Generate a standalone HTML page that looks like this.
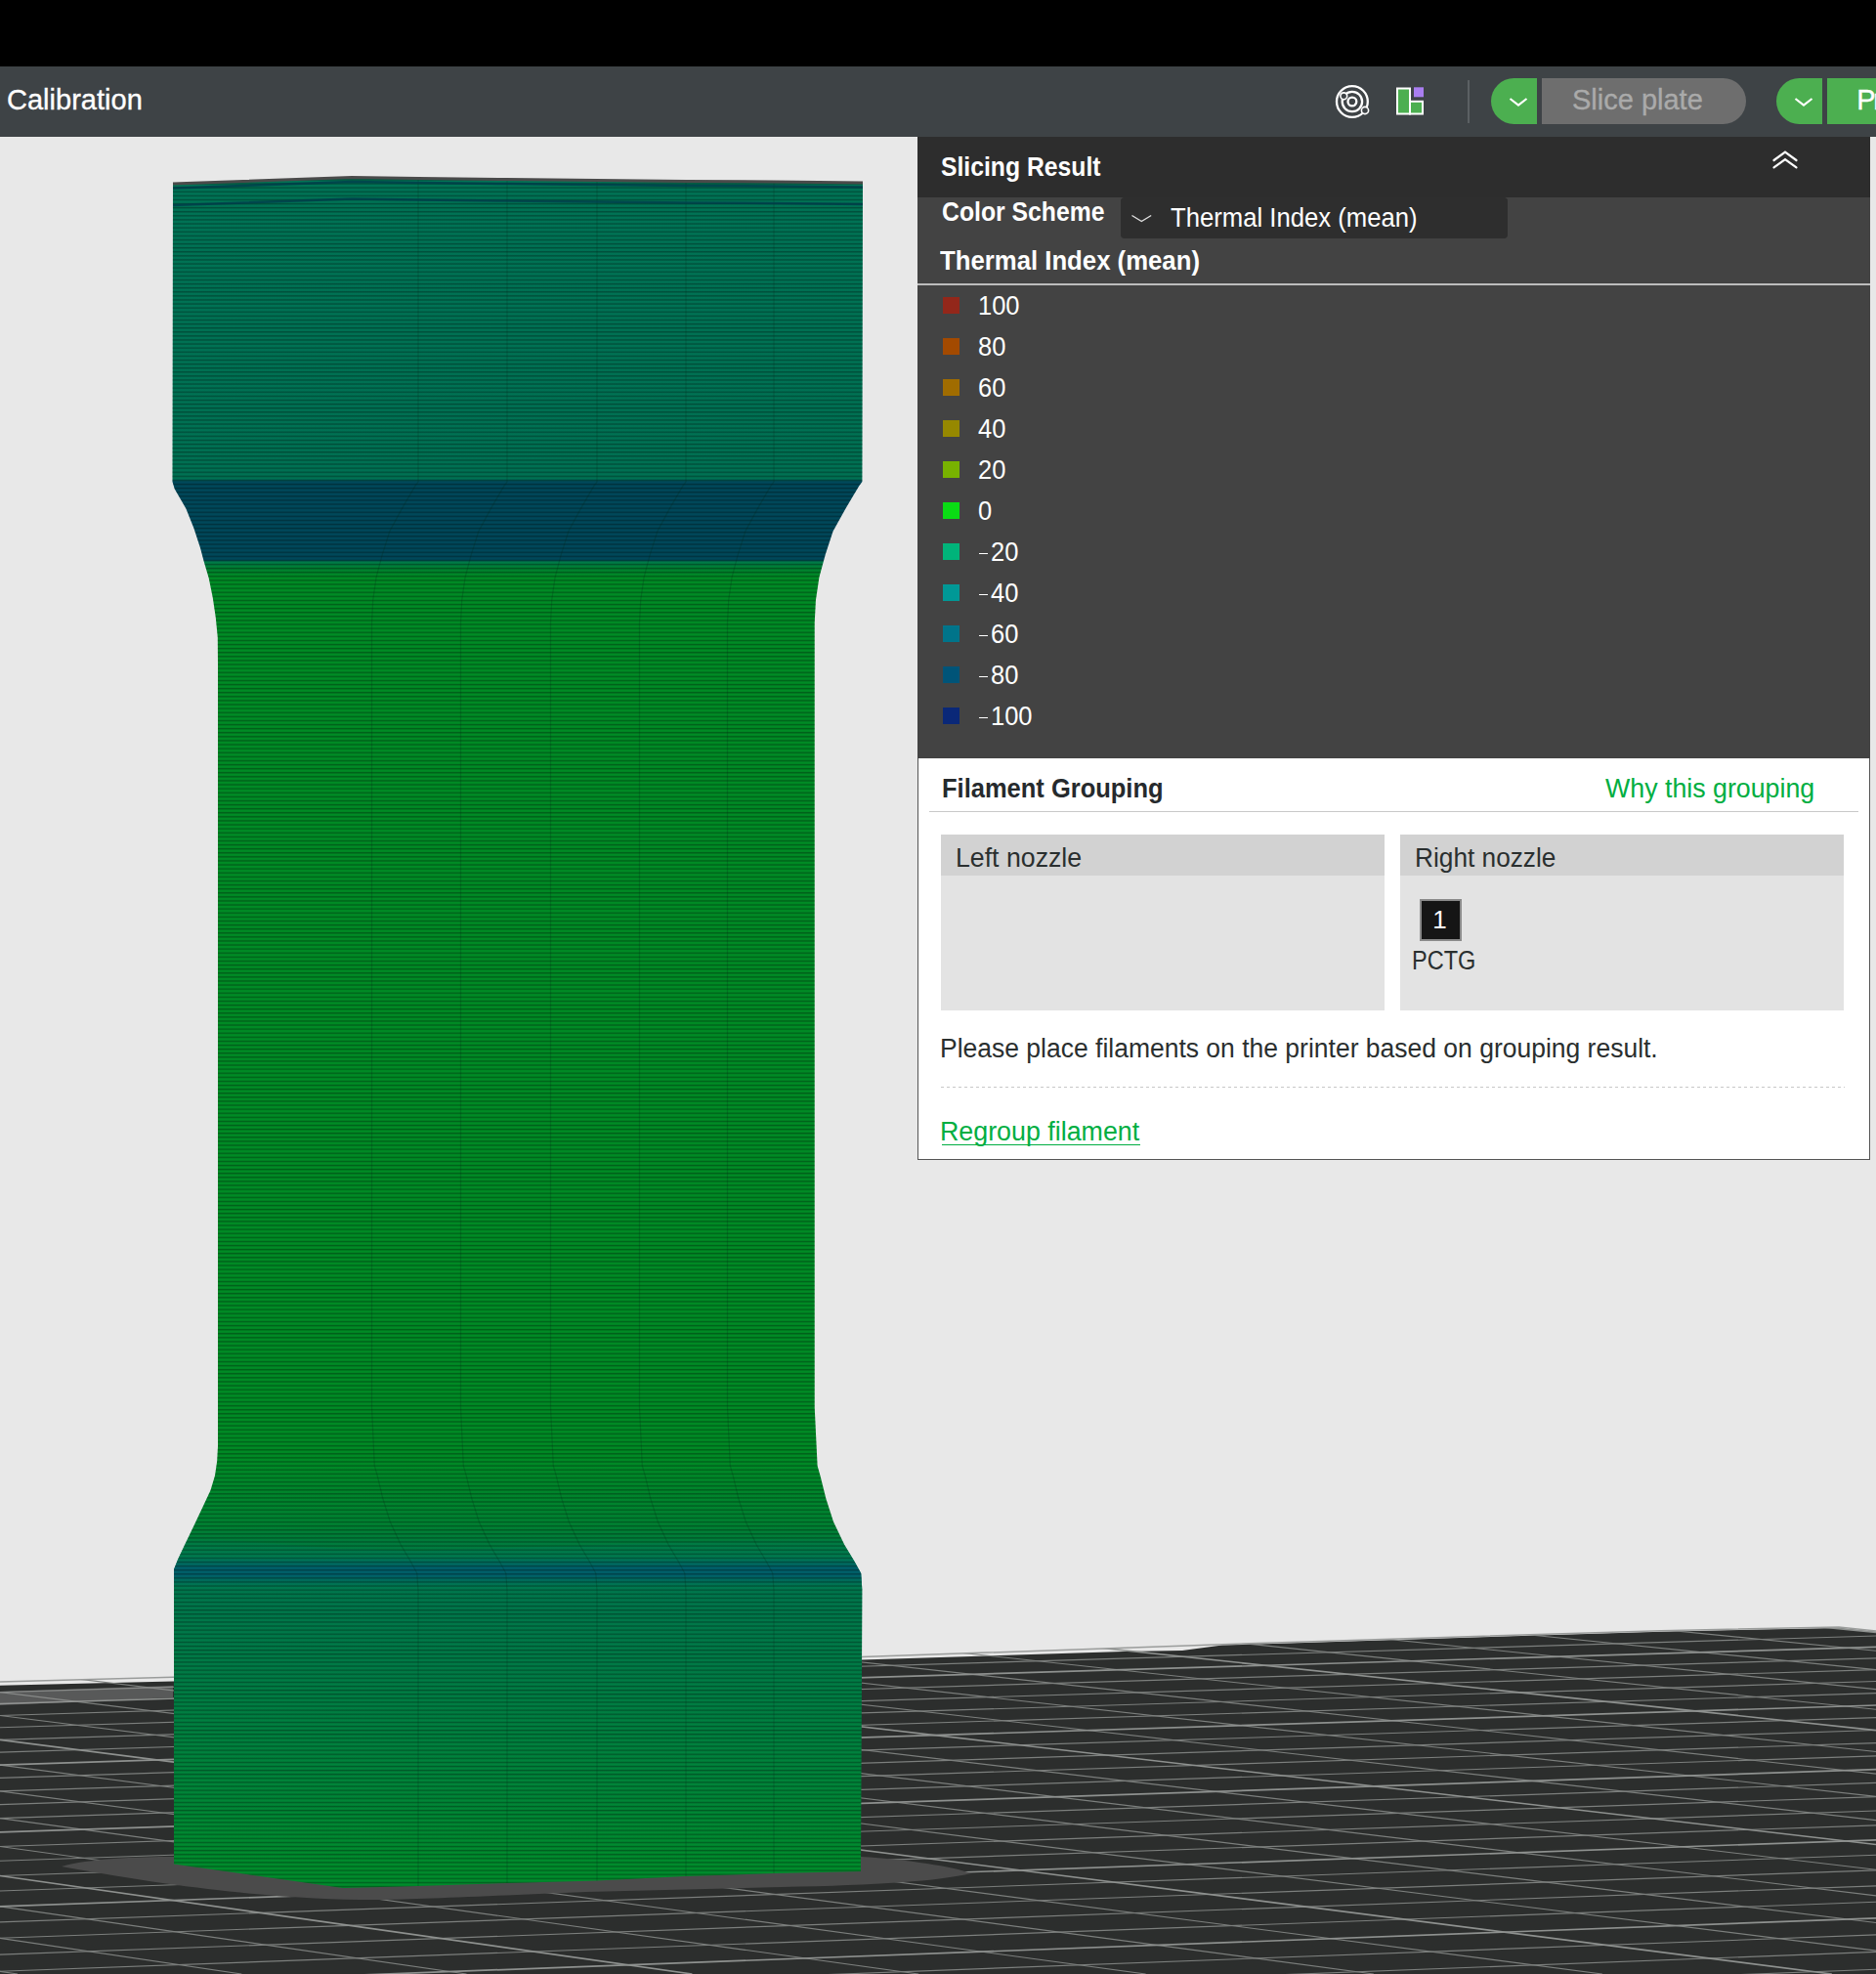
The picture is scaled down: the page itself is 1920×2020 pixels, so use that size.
<!DOCTYPE html>
<html><head><meta charset="utf-8">
<style>
html,body{margin:0;padding:0;}
body{width:1920px;height:2020px;overflow:hidden;position:relative;background:#e8e8e8;font-family:"Liberation Sans",sans-serif;}
.abs{position:absolute;}
.t{position:absolute;white-space:nowrap;line-height:1;}
.scene{position:absolute;left:0;top:0;}
#topbar{position:absolute;left:0;top:0;width:1920px;height:68px;background:#000;}
#toolbar{position:absolute;left:0;top:68px;width:1920px;height:72px;background:#3e4346;}
</style></head><body>
<svg class="scene" width="1920" height="2020" viewBox="0 0 1920 2020">
<defs>
<linearGradient id="colg" gradientUnits="userSpaceOnUse" x1="0" y1="180" x2="0" y2="1935">
<stop offset="0.0046" stop-color="#007355"/>
<stop offset="0.1766" stop-color="#007153"/>
<stop offset="0.1783" stop-color="#00485a"/>
<stop offset="0.2239" stop-color="#00485a"/>
<stop offset="0.2251" stop-color="#007a48"/>
<stop offset="0.2291" stop-color="#008030"/>
<stop offset="0.2336" stop-color="#008b25"/>
<stop offset="0.7464" stop-color="#008b25"/>
<stop offset="0.7863" stop-color="#008232"/>
<stop offset="0.8091" stop-color="#007848"/>
<stop offset="0.8262" stop-color="#00764c"/>
<stop offset="0.8775" stop-color="#007c45"/>
<stop offset="0.9345" stop-color="#00843a"/>
<stop offset="0.9858" stop-color="#008c2c"/>
</linearGradient>
<linearGradient id="bandg" x1="0" y1="0" x2="0" y2="1">
<stop offset="0" stop-color="#007a50" stop-opacity="0"/>
<stop offset="0.3" stop-color="#007a50" stop-opacity="0.85"/>
<stop offset="0.47" stop-color="#00606a" stop-opacity="1"/>
<stop offset="0.58" stop-color="#00606a" stop-opacity="1"/>
<stop offset="0.75" stop-color="#007850" stop-opacity="0.7"/>
<stop offset="1" stop-color="#007c48" stop-opacity="0"/>
</linearGradient>
<linearGradient id="strg" x1="0" y1="0" x2="0" y2="1">
<stop offset="0" stop-color="#000" stop-opacity="0"/>
<stop offset="0.45" stop-color="#000" stop-opacity="0"/>
<stop offset="0.75" stop-color="#000" stop-opacity="0.38"/>
<stop offset="1" stop-color="#000" stop-opacity="0.04"/>
</linearGradient>
<pattern id="stripes" patternUnits="userSpaceOnUse" x="0" y="0.5" width="40" height="4.1">
<rect x="0" y="0" width="40" height="4.1" fill="url(#strg)"/>
</pattern>
<clipPath id="colclip"><path d="M177,188 L176.5,493 L178.7,500.3 L190.4,520.5 L198.5,540.8 L205.1,561 L208.6,574.2 L213.7,591.5 L217.8,611.7 L220.8,632 L222.8,652.2 L223,680 L223,1480 L222.2,1495 L220,1510 L215.5,1525 L208.5,1540 L200,1558 L189,1581 L182,1596 L178,1606 L178,1907.5 L351,1932 L428,1930 L519,1927 L611,1924.5 L701,1920 L792,1917 L881,1915 L882.4,1627.6 L881.2,1610 L874.7,1598.3 L864.2,1580.7 L853,1557.3 L845.4,1533.8 L839.6,1510.4 L836.6,1500 L833.7,1440 L833.7,637.6 L834.9,614.2 L838.4,590.7 L844.8,567.3 L852.5,543.8 L865.4,520.4 L879.4,496.9 L882.4,493 L883,187 L792,186 L702,185.5 L611,184.5 L519,183.5 L428,182.6 L360,181.5 Z"/></clipPath>
</defs>
<rect x="0" y="140" width="1920" height="1880" fill="#e8e8e8"/>
<path d="M0,1724.8 L177,1720.5 L882,1698.4 L1150,1690 L1210,1689 L1251,1683.6 L1320,1681.4 L1700,1669.7 L1882,1666 L1920,1670 L1920,2020 L0,2020 Z" fill="#2c2e2d"/>
<clipPath id="plateclip"><path d="M0,1721 L177,1716.2 L882,1695.5 L1320,1680.4 L1700,1668.7 L1882,1665 L1920,1669 L1920,2020 L0,2020 Z"/></clipPath>
<g clip-path="url(#plateclip)">
<g stroke="#7c7f7d" stroke-width="1.15" fill="none"><line x1="0.0" y1="1731.6" x2="1920.0" y2="1674.0"/>
<line x1="0.0" y1="1755.5" x2="1920.0" y2="1696.8"/>
<line x1="0.0" y1="1767.8" x2="1920.0" y2="1708.6"/>
<line x1="0.0" y1="1780.4" x2="1920.0" y2="1720.5"/>
<line x1="0.0" y1="1793.1" x2="1920.0" y2="1732.6"/>
<line x1="0.0" y1="1819.4" x2="1920.0" y2="1757.6"/>
<line x1="0.0" y1="1832.9" x2="1920.0" y2="1770.5"/>
<line x1="0.0" y1="1846.6" x2="1920.0" y2="1783.6"/>
<line x1="0.0" y1="1860.6" x2="1920.0" y2="1796.9"/>
<line x1="0.0" y1="1889.5" x2="1920.0" y2="1824.4"/>
<line x1="0.0" y1="1904.3" x2="1920.0" y2="1838.6"/>
<line x1="0.0" y1="1919.5" x2="1920.0" y2="1853.0"/>
<line x1="0.0" y1="1935.0" x2="1920.0" y2="1867.8"/>
<line x1="0.0" y1="1966.9" x2="1920.0" y2="1898.2"/>
<line x1="0.0" y1="1983.3" x2="1920.0" y2="1913.8"/>
<line x1="0.0" y1="2000.1" x2="1920.0" y2="1929.8"/>
<line x1="0.0" y1="2017.3" x2="1920.0" y2="1946.2"/>
<line x1="0.0" y1="2052.7" x2="1920.0" y2="1979.9"/>
<line x1="0.0" y1="2071.0" x2="1920.0" y2="1997.4"/>
<line x1="0.0" y1="2089.7" x2="1920.0" y2="2015.2"/>
<line x1="0.0" y1="2108.9" x2="1920.0" y2="2033.5"/>
<line x1="0.0" y1="2148.5" x2="1920.0" y2="2071.2"/>
<line x1="1898.3" y1="1650.0" x2="1920.0" y2="1652.1"/>
<line x1="1524.6" y1="1650.0" x2="1920.0" y2="1689.3"/>
<line x1="1338.7" y1="1650.0" x2="1920.0" y2="1708.7"/>
<line x1="1153.5" y1="1650.0" x2="1920.0" y2="1728.7"/>
<line x1="968.9" y1="1650.0" x2="1920.0" y2="1749.3"/>
<line x1="601.7" y1="1650.0" x2="1920.0" y2="1792.5"/>
<line x1="419.0" y1="1650.0" x2="1920.0" y2="1815.1"/>
<line x1="237.0" y1="1650.0" x2="1920.0" y2="1838.4"/>
<line x1="55.5" y1="1650.0" x2="1920.0" y2="1862.6"/>
<line x1="0.0" y1="1686.1" x2="1920.0" y2="1913.3"/>
<line x1="0.0" y1="1708.5" x2="1920.0" y2="1939.9"/>
<line x1="0.0" y1="1731.6" x2="1920.0" y2="1967.5"/>
<line x1="0.0" y1="1755.5" x2="1920.0" y2="1996.1"/>
<line x1="0.0" y1="1806.1" x2="1639.9" y2="2020.0"/>
<line x1="0.0" y1="1832.9" x2="1405.9" y2="2020.0"/>
<line x1="0.0" y1="1860.6" x2="1172.6" y2="2020.0"/>
<line x1="0.0" y1="1889.5" x2="940.1" y2="2020.0"/>
<line x1="0.0" y1="1950.8" x2="477.5" y2="2020.0"/>
<line x1="0.0" y1="1983.3" x2="247.3" y2="2020.0"/>
<line x1="0.0" y1="2017.3" x2="18.0" y2="2020.0"/></g>
<g stroke="#8e918f" stroke-width="1.7" fill="none"><line x1="0.0" y1="1743.5" x2="1920.0" y2="1685.3"/>
<line x1="0.0" y1="1806.1" x2="1920.0" y2="1745.0"/>
<line x1="0.0" y1="1874.9" x2="1920.0" y2="1810.6"/>
<line x1="0.0" y1="1950.8" x2="1920.0" y2="1882.8"/>
<line x1="0.0" y1="2034.8" x2="1920.0" y2="1962.9"/>
<line x1="0.0" y1="2128.5" x2="1920.0" y2="2052.1"/>
<line x1="1711.1" y1="1650.0" x2="1920.0" y2="1670.4"/>
<line x1="785.0" y1="1650.0" x2="1920.0" y2="1770.6"/>
<line x1="0.0" y1="1664.5" x2="1920.0" y2="1887.5"/>
<line x1="0.0" y1="1780.4" x2="1874.8" y2="2020.0"/>
<line x1="0.0" y1="1919.5" x2="708.4" y2="2020.0"/></g>
</g>
<path d="M0,1731 L177,1725 L177,1737 L0,1745 Z" fill="#9a9a9a" opacity="0.4"/>
<path d="M0,1721 L177,1716.2 L882,1695.5 L1320,1680.4 L1700,1668.7 L1882,1665 L1920,1669" stroke="#9a9c9b" stroke-width="1.5" fill="none"/>
<path d="M63,1910 C90,1902 140,1900 178,1900 L881,1900 C930,1903 975,1910 994,1917 C960,1925 900,1929 800,1931 L600,1936 C500,1940 420,1944 383,1944 C300,1944 200,1935 63,1910 Z" fill="#4b4b4b"/>
<path d="M177,188 L176.5,493 L178.7,500.3 L190.4,520.5 L198.5,540.8 L205.1,561 L208.6,574.2 L213.7,591.5 L217.8,611.7 L220.8,632 L222.8,652.2 L223,680 L223,1480 L222.2,1495 L220,1510 L215.5,1525 L208.5,1540 L200,1558 L189,1581 L182,1596 L178,1606 L178,1907.5 L351,1932 L428,1930 L519,1927 L611,1924.5 L701,1920 L792,1917 L881,1915 L882.4,1627.6 L881.2,1610 L874.7,1598.3 L864.2,1580.7 L853,1557.3 L845.4,1533.8 L839.6,1510.4 L836.6,1500 L833.7,1440 L833.7,637.6 L834.9,614.2 L838.4,590.7 L844.8,567.3 L852.5,543.8 L865.4,520.4 L879.4,496.9 L882.4,493 L883,187 L792,186 L702,185.5 L611,184.5 L519,183.5 L428,182.6 L360,181.5 Z" fill="url(#colg)"/>
<g clip-path="url(#colclip)">
<path d="M170,1572 L178,1572 L351,1585 L428,1587 L519,1584 L611,1581 L701,1578 L792,1575 L881,1573 L890,1573 L890,1627 L881,1627 L792,1629 L701,1632 L611,1635 L519,1638 L428,1641 L351,1639 L178,1626 L170,1626 Z" fill="url(#bandg)"/>
</g>
<path d="M177,188 L176.5,493 L178.7,500.3 L190.4,520.5 L198.5,540.8 L205.1,561 L208.6,574.2 L213.7,591.5 L217.8,611.7 L220.8,632 L222.8,652.2 L223,680 L223,1480 L222.2,1495 L220,1510 L215.5,1525 L208.5,1540 L200,1558 L189,1581 L182,1596 L178,1606 L178,1907.5 L351,1932 L428,1930 L519,1927 L611,1924.5 L701,1920 L792,1917 L881,1915 L882.4,1627.6 L881.2,1610 L874.7,1598.3 L864.2,1580.7 L853,1557.3 L845.4,1533.8 L839.6,1510.4 L836.6,1500 L833.7,1440 L833.7,637.6 L834.9,614.2 L838.4,590.7 L844.8,567.3 L852.5,543.8 L865.4,520.4 L879.4,496.9 L882.4,493 L883,187 L792,186 L702,185.5 L611,184.5 L519,183.5 L428,182.6 L360,181.5 Z" fill="url(#stripes)"/>
<path d="M428.0,182.6 L428.0,493 L425.1,496.9 L411.4,520.4 L398.8,543.8 L391.3,567.3 L385.1,590.7 L381.7,614.2 L380.5,637.6 L380.5,1440 L383.3,1500 L386.3,1510.4 L391.9,1533.8 L399.3,1557.3 L410.2,1580.7 L420.5,1598.3 L426.8,1610 L428.0,1627.6 L428.0,1930 M519.0,183.5 L519.0,493 L516.1,496.9 L502.4,520.4 L489.8,543.8 L482.3,567.3 L476.1,590.7 L472.7,614.2 L471.5,637.6 L471.5,1440 L474.3,1500 L477.3,1510.4 L482.9,1533.8 L490.3,1557.3 L501.2,1580.7 L511.5,1598.3 L517.8,1610 L519.0,1627.6 L519.0,1927 M611.0,184.5 L611.0,493 L608.1,496.9 L594.4,520.4 L581.8,543.8 L574.3,567.3 L568.1,590.7 L564.7,614.2 L563.5,637.6 L563.5,1440 L566.3,1500 L569.3,1510.4 L574.9,1533.8 L582.3,1557.3 L593.2,1580.7 L603.5,1598.3 L609.8,1610 L611.0,1627.6 L611.0,1924.5 M702.0,185.5 L702.0,493 L699.1,496.9 L685.4,520.4 L672.8,543.8 L665.3,567.3 L659.1,590.7 L655.7,614.2 L654.5,637.6 L654.5,1440 L657.3,1500 L660.3,1510.4 L665.9,1533.8 L673.3,1557.3 L684.2,1580.7 L694.5,1598.3 L700.8,1610 L702.0,1627.6 L702.0,1920 M792.0,186 L792.0,493 L789.1,496.9 L775.4,520.4 L762.8,543.8 L755.3,567.3 L749.1,590.7 L745.7,614.2 L744.5,637.6 L744.5,1440 L747.3,1500 L750.3,1510.4 L755.9,1533.8 L763.3,1557.3 L774.2,1580.7 L784.5,1598.3 L790.8,1610 L792.0,1627.6 L792.0,1917" stroke="#002a18" stroke-opacity="0.22" stroke-width="1.2" fill="none"/>
<g clip-path="url(#colclip)">
<path d="M177,192.5 L360,186 L428,187.1 L519,188 L611,189 L702,190 L792,190.5 L883,191.5" stroke="#003a4a" stroke-width="2.5" fill="none" opacity="0.75"/>
<path d="M177,210 L360,203.5 L428,204.6 L519,205.5 L611,206.5 L702,207.5 L792,208 L883,209" stroke="#003a4a" stroke-width="2.5" fill="none" opacity="0.75"/>
</g>
<path d="M177,188 L360,181.5 L428,182.6 L519,183.5 L611,184.5 L702,185.5 L792,186 L883,187" stroke="#4a4a4a" stroke-width="3" fill="none"/>
</svg>
<div id="topbar"></div>
<div id="toolbar"></div>
<div class="t" style="left:7px;top:87.20px;font-size:30px;font-weight:400;color:#ffffff;transform:scaleX(0.968);transform-origin:0 0;-webkit-text-stroke:0.35px #fff;">Calibration</div>
<svg class="abs" style="left:1364px;top:84px" width="40" height="40" viewBox="1364 84 40 40">
<g fill="none" stroke="#fff" stroke-width="2.3">
<circle cx="1383.9" cy="104" r="15.9"/>
<circle cx="1383.9" cy="104" r="10.2"/>
<circle cx="1383.9" cy="104" r="4.4"/>
</g>
<circle cx="1375.3" cy="98.3" r="3.4" fill="#3e4346" stroke="#fff" stroke-width="1.6"/>
<circle cx="1397" cy="113" r="3.6" fill="#3e4346" stroke="#fff" stroke-width="1.6"/>
<circle cx="1387" cy="106.5" r="1" fill="#fff"/>
</svg>
<svg class="abs" style="left:1427px;top:87px" width="32" height="33" viewBox="1427 87 32 33">
<rect x="1430" y="90.5" width="13" height="26" fill="#4caf50" stroke="#fff" stroke-width="2"/>
<rect x="1443" y="103.8" width="13" height="12.7" fill="#4caf50" stroke="#fff" stroke-width="2"/>
<rect x="1447" y="89.3" width="10" height="10" fill="#a97ef0"/>
</svg>
<div class="abs" style="left:1502px;top:82px;width:2px;height:44px;background:#5b6063"></div>
<div class="abs" style="left:1526px;top:80px;width:47px;height:47px;background:#4caf50;border-radius:23.5px 0 0 23.5px"></div>
<svg class="abs" style="left:1544px;top:99px" width="20" height="11" viewBox="0 0 20 11"><polyline points="1.5,2 10,8.5 18.5,2" fill="none" stroke="#fff" stroke-width="2.2"/></svg>
<div class="abs" style="left:1578px;top:80px;width:209px;height:47px;background:#6e6e6e;border-radius:0 23.5px 23.5px 0"></div>
<div class="t" style="left:1609px;top:88.25px;font-size:29px;font-weight:400;color:#aaaaaa;-webkit-text-stroke:0.35px #aaaaaa;">Slice plate</div>
<div class="abs" style="left:1818px;top:80px;width:47px;height:47px;background:#4caf50;border-radius:23.5px 0 0 23.5px"></div>
<svg class="abs" style="left:1836px;top:99px" width="20" height="11" viewBox="0 0 20 11"><polyline points="1.5,2 10,8.5 18.5,2" fill="none" stroke="#fff" stroke-width="2.2"/></svg>
<div class="abs" style="left:1870px;top:80px;width:50px;height:47px;background:#4caf50;overflow:hidden"></div>
<div class="t" style="left:1900.3px;top:88.25px;font-size:29px;font-weight:400;color:#ffffff;letter-spacing:-2.5px;-webkit-text-stroke:0.35px #fff;">Pr</div>
<div class="abs" style="left:939px;top:140px;width:975px;height:62px;background:#2d2d2d"></div>
<div class="abs" style="left:939px;top:202px;width:975px;height:574px;background:#434343"></div>
<div class="abs" style="left:939px;top:776px;width:973px;height:410px;background:#ffffff;border:1px solid #555;border-top:none"></div>
<div class="t" style="left:963px;top:157.94px;font-size:27px;font-weight:700;color:#ffffff;transform:scaleX(0.916);transform-origin:0 0;">Slicing Result</div>
<svg class="abs" style="left:1812px;top:152px" width="30" height="23" viewBox="1812 152 30 23">
<g fill="none" stroke="#fff" stroke-width="2.2" stroke-linecap="round">
<polyline points="1815.5,164 1827,155.6 1838.5,164"/>
<polyline points="1815.5,171.4 1827,163 1838.5,171.4"/>
</g></svg>
<div class="t" style="left:963.5px;top:204.14px;font-size:27px;font-weight:700;color:#ffffff;transform:scaleX(0.917);transform-origin:0 0;">Color Scheme</div>
<div class="abs" style="left:1147px;top:202px;width:396px;height:42px;background:#2e2e2e;border-radius:4px"></div>
<svg class="abs" style="left:1156px;top:217px" width="25" height="13" viewBox="1156 217 25 13"><polyline points="1158.5,220.5 1168.3,226.5 1178.2,220.5" fill="none" stroke="#e0e0e0" stroke-width="1.4"/></svg>
<div class="t" style="left:1197.6px;top:210.04px;font-size:27px;font-weight:400;color:#ffffff;transform:scaleX(0.951);transform-origin:0 0;">Thermal Index (mean)</div>
<div class="t" style="left:962px;top:254.14px;font-size:27px;font-weight:700;color:#ffffff;transform:scaleX(0.953);transform-origin:0 0;">Thermal Index (mean)</div>
<div class="abs" style="left:939px;top:290px;width:975px;height:1.5px;background:#bcbcbc"></div>
<div class="abs" style="left:965px;top:304px;width:17px;height:17px;background:#93271a"></div>
<div class="t" style="left:1000.8px;top:299.94px;font-size:27px;font-weight:400;color:#ffffff;transform:scaleX(0.944);transform-origin:0 0;">100</div>
<div class="abs" style="left:965px;top:346px;width:17px;height:17px;background:#a34a00"></div>
<div class="t" style="left:1000.8px;top:341.94px;font-size:27px;font-weight:400;color:#ffffff;transform:scaleX(0.944);transform-origin:0 0;">80</div>
<div class="abs" style="left:965px;top:388px;width:17px;height:17px;background:#a06c00"></div>
<div class="t" style="left:1000.8px;top:383.94px;font-size:27px;font-weight:400;color:#ffffff;transform:scaleX(0.944);transform-origin:0 0;">60</div>
<div class="abs" style="left:965px;top:430px;width:17px;height:17px;background:#968800"></div>
<div class="t" style="left:1000.8px;top:425.94px;font-size:27px;font-weight:400;color:#ffffff;transform:scaleX(0.944);transform-origin:0 0;">40</div>
<div class="abs" style="left:965px;top:472px;width:17px;height:17px;background:#78b200"></div>
<div class="t" style="left:1000.8px;top:467.94px;font-size:27px;font-weight:400;color:#ffffff;transform:scaleX(0.944);transform-origin:0 0;">20</div>
<div class="abs" style="left:965px;top:514px;width:17px;height:17px;background:#0adc14"></div>
<div class="t" style="left:1000.8px;top:509.94px;font-size:27px;font-weight:400;color:#ffffff;transform:scaleX(0.944);transform-origin:0 0;">0</div>
<div class="abs" style="left:965px;top:556px;width:17px;height:17px;background:#00b47a"></div>
<div class="abs" style="left:1001.5px;top:565.6px;width:9.5px;height:1.8px;background:#ffffff"></div>
<div class="t" style="left:1013.5px;top:551.94px;font-size:27px;font-weight:400;color:#ffffff;transform:scaleX(0.944);transform-origin:0 0;">20</div>
<div class="abs" style="left:965px;top:598px;width:17px;height:17px;background:#009896"></div>
<div class="abs" style="left:1001.5px;top:607.6px;width:9.5px;height:1.8px;background:#ffffff"></div>
<div class="t" style="left:1013.5px;top:593.94px;font-size:27px;font-weight:400;color:#ffffff;transform:scaleX(0.944);transform-origin:0 0;">40</div>
<div class="abs" style="left:965px;top:640px;width:17px;height:17px;background:#00748a"></div>
<div class="abs" style="left:1001.5px;top:649.6px;width:9.5px;height:1.8px;background:#ffffff"></div>
<div class="t" style="left:1013.5px;top:635.94px;font-size:27px;font-weight:400;color:#ffffff;transform:scaleX(0.944);transform-origin:0 0;">60</div>
<div class="abs" style="left:965px;top:682px;width:17px;height:17px;background:#005478"></div>
<div class="abs" style="left:1001.5px;top:691.6px;width:9.5px;height:1.8px;background:#ffffff"></div>
<div class="t" style="left:1013.5px;top:677.94px;font-size:27px;font-weight:400;color:#ffffff;transform:scaleX(0.944);transform-origin:0 0;">80</div>
<div class="abs" style="left:965px;top:724px;width:17px;height:17px;background:#0a2878"></div>
<div class="abs" style="left:1001.5px;top:733.6px;width:9.5px;height:1.8px;background:#ffffff"></div>
<div class="t" style="left:1013.5px;top:719.94px;font-size:27px;font-weight:400;color:#ffffff;transform:scaleX(0.944);transform-origin:0 0;">100</div>
<div class="t" style="left:964px;top:793.94px;font-size:27px;font-weight:700;color:#262a2d;transform:scaleX(0.944);transform-origin:0 0;">Filament Grouping</div>
<div class="t" style="left:1642.6px;top:793.64px;font-size:27px;font-weight:400;color:#00ae42;transform:scaleX(0.991);transform-origin:0 0;">Why this grouping</div>
<div class="abs" style="left:951px;top:830px;width:951px;height:1px;background:#c9c9c9"></div>
<div class="abs" style="left:963px;top:854px;width:454px;height:42px;background:#d2d2d2"></div>
<div class="abs" style="left:963px;top:896px;width:454px;height:138px;background:#e3e3e3"></div>
<div class="abs" style="left:1433px;top:854px;width:454px;height:42px;background:#d2d2d2"></div>
<div class="abs" style="left:1433px;top:896px;width:454px;height:138px;background:#e3e3e3"></div>
<div class="t" style="left:978px;top:864.54px;font-size:27px;font-weight:400;color:#2a2f2f;transform:scaleX(0.989);transform-origin:0 0;">Left nozzle</div>
<div class="t" style="left:1448.2px;top:864.54px;font-size:27px;font-weight:400;color:#2a2f2f;transform:scaleX(0.972);transform-origin:0 0;">Right nozzle</div>
<div class="abs" style="left:1453px;top:920px;width:39px;height:39px;background:#151515;border:2px solid #8a8a8a"></div>
<div class="t" style="left:1466.3px;top:928.09px;font-size:26px;font-weight:400;color:#ffffff;">1</div>
<div class="t" style="left:1445.3px;top:969.94px;font-size:27px;font-weight:400;color:#2a2f2f;transform:scaleX(0.871);transform-origin:0 0;">PCTG</div>
<div class="t" style="left:962px;top:1059.94px;font-size:27px;font-weight:400;color:#2a2f2f;transform:scaleX(0.981);transform-origin:0 0;">Please place filaments on the printer based on grouping result.</div>
<div class="abs" style="left:963px;top:1111.5px;width:925px;height:1px;background:repeating-linear-gradient(90deg,#c8c8c8 0 3px,transparent 3px 6px)"></div>
<div class="t" style="left:962px;top:1145.34px;font-size:27px;font-weight:400;color:#00ae42;transform:scaleX(0.993);transform-origin:0 0;">Regroup filament</div>
<div class="abs" style="left:964px;top:1170.5px;width:203px;height:1.5px;background:#00ae42"></div>
</body></html>
